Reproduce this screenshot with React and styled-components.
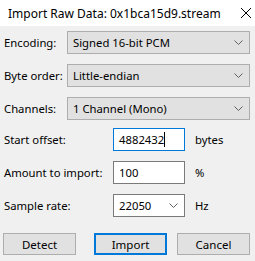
import styled, { createGlobalStyle } from "styled-components";

const GlobalStyle = createGlobalStyle`
  html, body {
    margin: 0;
    padding: 0;
    background: #f0f0f0;
  }
  body {
    font-family: "Noto Sans", "Open Sans", sans-serif;
    font-size: 11.3px;
    color: #000;
  }
`;

const Window = styled.div`
  width: 255px;
  height: 261px;
  background: #f0f0f0;
  display: flex;
  flex-direction: column;
  overflow: hidden;
`;

const TitleBar = styled.div`
  height: 26px;
  background: #fff;
  display: flex;
  align-items: center;
  justify-content: space-between;
  padding: 0 4px 0 8px;
  font-size: 12px;
`;

const Close = styled.svg`
  width: 10px;
  height: 10px;
`;

const TopRows = styled.div`
  display: grid;
  grid-template-columns: 63px 183px;
  row-gap: 10px;
  align-items: center;
  padding: 5px 0 0 4px;
`;

const BottomRows = styled.div`
  display: grid;
  grid-template-columns: 99px 72px auto;
  column-gap: 10px;
  row-gap: 10px;
  align-items: center;
  padding: 8px 0 0 4px;
`;

const Label = styled.div`
  white-space: nowrap;
`;

const Combo = styled.div`
  height: 23px;
  box-sizing: border-box;
  border: 1px solid ${(p) => (p.$light ? "#7a7a7a" : "#adadad")};
  background: ${(p) => (p.$light ? "#fff" : "#e1e1e1")};
  display: flex;
  align-items: center;
  justify-content: space-between;
  padding: 0 6px 0 5px;
`;

const Chevron = styled.svg`
  width: 9px;
  height: 5px;
`;

const Field = styled.div`
  height: 23px;
  box-sizing: border-box;
  border: 1px solid ${(p) => (p.$focused ? "#0078d7" : "#7a7a7a")};
  background: #fff;
  display: flex;
  align-items: center;
  padding: 0 5px;
`;

const Caret = styled.span`
  display: inline-block;
  width: 1px;
  height: 15px;
  background: #000;
`;

const Unit = styled.div``;

const ButtonRow = styled.div`
  display: flex;
  padding: 16px 0 0 3px;
`;

const Button = styled.button`
  width: 73px;
  height: 22px;
  box-sizing: border-box;
  margin-left: ${(p) => p.$gap || 0}px;
  font-family: inherit;
  font-size: 11.5px;
  color: #000;
  background: #e1e1e1;
  border: ${(p) => (p.$default ? "2px solid #0078d7" : "1px solid #adadad")};
  padding: 0;
`;

const ChevronIcon = () => (
  <Chevron viewBox="0 0 9 5">
    <path d="M0.5 0.5 L4.5 4.5 L8.5 0.5" fill="none" stroke="#606060" strokeWidth="1" />
  </Chevron>
);

export default function App() {
  return (
    <>
      <GlobalStyle />
      <Window>
        <TitleBar>
          <span>Import Raw Data: 0x1bca15d9.stream</span>
          <Close viewBox="0 0 10 10">
            <path d="M0 0 L10 10 M10 0 L0 10" stroke="#000" strokeWidth="1" />
          </Close>
        </TitleBar>
        <TopRows>
          <Label>Encoding:</Label>
          <Combo>
            <span>Signed 16-bit PCM</span>
            <ChevronIcon />
          </Combo>
          <Label>Byte order:</Label>
          <Combo>
            <span>Little-endian</span>
            <ChevronIcon />
          </Combo>
          <Label>Channels:</Label>
          <Combo>
            <span>1 Channel (Mono)</span>
            <ChevronIcon />
          </Combo>
        </TopRows>
        <BottomRows>
          <Label>Start offset:</Label>
          <Field $focused>
            <span>4882432</span>
            <Caret />
          </Field>
          <Unit>bytes</Unit>
          <Label>Amount to import:</Label>
          <Field>
            <span>100</span>
          </Field>
          <Unit>%</Unit>
          <Label>Sample rate:</Label>
          <Combo $light>
            <span>22050</span>
            <ChevronIcon />
          </Combo>
          <Unit>Hz</Unit>
        </BottomRows>
        <ButtonRow>
          <Button>Detect</Button>
          <Button $default $gap={18}>Import</Button>
          <Button $gap={10}>Cancel</Button>
        </ButtonRow>
      </Window>
    </>
  );
}
